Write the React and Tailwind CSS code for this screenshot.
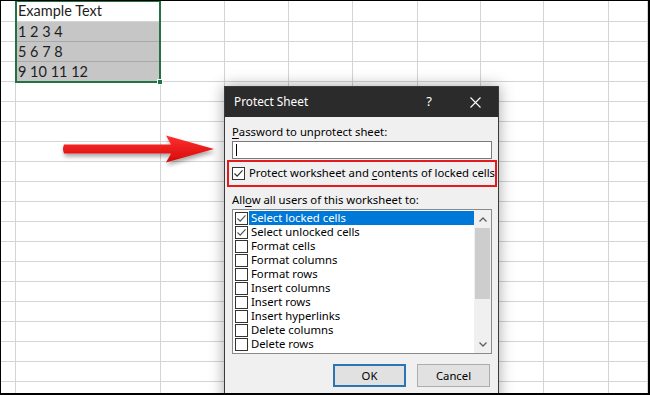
import React from "react"

const sheetRows = 20
const sheetCols = 10
const cellText = { 0: "Example Text", 1: "1 2 3 4", 2: "5 6 7 8", 3: "9 10 11 12" }

const permissions = [
  { label: "Select locked cells", checked: true, selected: true },
  { label: "Select unlocked cells", checked: true },
  { label: "Format cells" },
  { label: "Format columns" },
  { label: "Format rows" },
  { label: "Insert columns" },
  { label: "Insert rows" },
  { label: "Insert hyperlinks" },
  { label: "Delete columns" },
  { label: "Delete rows" },
]

function CheckBox({ checked, dark }) {
  return (
    <div className="w-[13px] h-[13px] shrink-0 border border-[#333] bg-white flex items-center justify-center">
      {checked && (
        <svg width="11" height="11" viewBox="0 0 11 11">
          <path d="M1.5 5.5 L4.2 8.2 L9.5 2.3" fill="none" stroke={dark ? "#333" : "#555"} strokeWidth="1.2" />
        </svg>
      )}
    </div>
  )
}

function Sheet() {
  const cells = []
  for (let r = 0; r < sheetRows; r++) {
    for (let c = 0; c < sheetCols; c++) {
      const filled = c === 1 && r >= 1 && r <= 3
      cells.push(
        <div
          key={`${r}-${c}`}
          className={
            filled
              ? "border-r border-b border-[#a9a9a9] bg-[#c6c6c6] pl-[2px] text-[14.5px] leading-[20px] text-[#1e1e1e] whitespace-nowrap overflow-hidden"
              : "border-r border-b border-[#d4d4d4] pl-[2px] text-[14.5px] leading-[20px] text-[#1e1e1e] whitespace-nowrap overflow-hidden"
          }
        >
          {c === 1 ? cellText[r] : null}
        </div>
      )
    }
  }
  return (
    <div className="grid grid-cols-[15px_145px_64px_64px_64px_65px_63px_63px_65px_1fr] grid-rows-[21px_repeat(19,20px)] font-['Lato',sans-serif]">
      {cells}
    </div>
  )
}

function Arrow() {
  return (
    <svg className="absolute left-[57px] top-[127px]" width="165" height="42" viewBox="0 0 165 42">
      <defs>
        <linearGradient id="arrowFill" x1="0" y1="0" x2="0" y2="1">
          <stop offset="0" stopColor="#ff3030" />
          <stop offset="1" stopColor="#d40a0a" />
        </linearGradient>
        <filter id="arrowShadow" x="-10%" y="-30%" width="130%" height="180%">
          <feDropShadow dx="1" dy="3" stdDeviation="2" floodColor="#000" floodOpacity="0.35" />
        </filter>
      </defs>
      <path
        d="M6 16.5 L113 16.5 L108 7.5 L156 21 L108 34.5 L113 25.5 L6 25.5 Q4 21 6 16.5 Z"
        fill="url(#arrowFill)"
        filter="url(#arrowShadow)"
      />
    </svg>
  )
}

function Dialog() {
  return (
    <div className="absolute left-[223px] top-[85px] w-[275px] h-[320px] bg-[#f0f0f0] border border-[#3a3a3a] shadow-[0_0_14px_rgba(0,0,0,0.35)] font-['Noto_Sans',sans-serif] text-[11.3px] text-black">
      <div className="h-[30px] bg-[#2b2b2b] flex items-center text-white">
        <span className="ml-[9px] text-[11.8px] flex-1">Protect Sheet</span>
        <span className="text-[13px] mr-[38px]">?</span>
        <svg className="mr-[17px]" width="11" height="11" viewBox="0 0 11 11">
          <path d="M0.5 0.5 L10.5 10.5 M10.5 0.5 L0.5 10.5" stroke="#fff" strokeWidth="1.1" />
        </svg>
      </div>
      <div className="px-[7px] pt-[7px]">
        <div className="leading-[16px]">
          <u className="underline-offset-2">P</u>assword to unprotect sheet:
        </div>
        <div className="mt-[1px] w-[260px] h-[18px] border border-[#7a7a7a] bg-white flex items-center pl-[3px]">
          <div className="w-px h-[12px] bg-black" />
        </div>
      </div>
      <div className="ml-[2px] mt-[1px] w-[270px] h-[27px] border-[2.5px] border-[#e31b1f] flex items-center pl-[3px] gap-[4px]">
        <CheckBox checked dark />
        <span className="whitespace-nowrap">
          Protect worksheet and <u className="underline-offset-2">c</u>ontents of locked cells
        </span>
      </div>
      <div className="px-[7px]">
        <div className="mt-[5px] leading-[16px]">
          All<u className="underline-offset-2">o</u>w all users of this worksheet to:
        </div>
        <div className="mt-[1px] w-[260px] h-[145px] border border-[#8a8a8a] bg-white flex">
          <div className="flex-1 pt-px pl-[2px]">
            {permissions.map((p) => (
              <div key={p.label} className="h-[14px] flex items-center">
                <CheckBox checked={p.checked} />
                <div
                  className={
                    p.selected
                      ? "ml-[1px] h-[14px] flex-1 bg-[#0078d7] text-white pl-[2px] leading-[14px] whitespace-nowrap"
                      : "ml-[1px] h-[14px] flex-1 pl-[2px] leading-[14px] whitespace-nowrap"
                  }
                >
                  {p.label}
                </div>
              </div>
            ))}
          </div>
          <div className="w-[17px] bg-[#f0f0f0] flex flex-col items-center">
            <div className="h-[18px] flex items-center justify-center">
              <svg width="8" height="5" viewBox="0 0 8 5">
                <path d="M0.5 4.5 L4 1 L7.5 4.5" fill="none" stroke="#606060" strokeWidth="1.3" />
              </svg>
            </div>
            <div className="w-[15px] h-[71px] bg-[#cdcdcd]" />
            <div className="flex-1" />
            <div className="h-[18px] flex items-center justify-center">
              <svg width="8" height="5" viewBox="0 0 8 5">
                <path d="M0.5 0.5 L4 4 L7.5 0.5" fill="none" stroke="#606060" strokeWidth="1.3" />
              </svg>
            </div>
          </div>
        </div>
        <div className="mt-[10px] flex justify-end gap-[11px] pr-[1px]">
          <button className="w-[73px] h-[23px] bg-[#e1e1e1] border-2 border-[#2d74b4] leading-none">OK</button>
          <button className="w-[73px] h-[23px] bg-[#e1e1e1] border border-[#adadad] leading-none">Cancel</button>
        </div>
      </div>
    </div>
  )
}

export default function App() {
  return (
    <div className="relative w-[650px] h-[395px] overflow-hidden bg-white border-l border-t border-r-2 border-b-2 border-black">
      <Sheet />
      <div className="absolute left-[14px] top-[-1px] w-[146px] h-[83px] border-2 border-[#217346]" />
      <div className="absolute left-[156px] top-[78px] w-[6px] h-[6px] bg-[#217346] border border-white" />
      <Arrow />
      <Dialog />
    </div>
  )
}
